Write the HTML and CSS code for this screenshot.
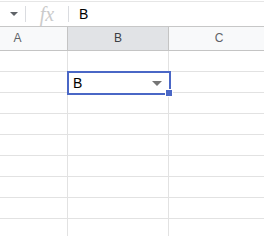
FILE: index.html
```html
<!DOCTYPE html>
<html>
    <head>
        <link rel="stylesheet" href="styles.css">
    </head>
    <body>
        <div class="formula-bar">
            <div class="name-box"><span class="caret"></span></div>
            <div class="fx">fx</div>
            <div class="formula-value">B</div>
        </div>

        <div class="sheet">
            <div class="col-head">A</div>
            <div class="col-head selected">B</div>
            <div class="col-head">C</div>

            <div class="cell"></div><div class="cell"></div><div class="cell"></div>
            <div class="cell"></div>
            <div class="cell active">
                <span>B</span>
                <span class="cell-caret"></span>
                <span class="handle"></span>
            </div>
            <div class="cell"></div>
            <div class="cell"></div><div class="cell"></div><div class="cell"></div>
            <div class="cell"></div><div class="cell"></div><div class="cell"></div>
            <div class="cell"></div><div class="cell"></div><div class="cell"></div>
            <div class="cell"></div><div class="cell"></div><div class="cell"></div>
            <div class="cell"></div><div class="cell"></div><div class="cell"></div>
            <div class="cell"></div><div class="cell"></div><div class="cell"></div>
            <div class="cell"></div><div class="cell"></div><div class="cell"></div>
        </div>
    </body>
</html>
```

FILE: styles.css
```css
body {
    margin: 0;
    background: #fff;
    font-family: "Liberation Sans", Arial, sans-serif;
    overflow: hidden;
}

.formula-bar {
    display: flex;
    align-items: center;
    height: 24px;
    border-top: 1px solid #e6e6e6;
    border-bottom: 1px solid #c7c7c7;
    margin-top: 1px;
}

.name-box {
    width: 25px;
    height: 16px;
    display: flex;
    align-items: center;
    justify-content: center;
    border-right: 1px solid #dadce0;
}

.caret {
    width: 0;
    height: 0;
    border-left: 4px solid transparent;
    border-right: 4px solid transparent;
    border-top: 4px solid #5f6368;
    margin-left: 2px;
}

.fx {
    width: 42px;
    height: 16px;
    line-height: 16px;
    text-align: center;
    font-family: "Liberation Serif", serif;
    font-style: italic;
    font-size: 20px;
    color: #cbcbcb;
    border-right: 1px solid #dadce0;
}

.formula-value {
    padding-left: 10px;
    font-size: 14px;
    color: #000;
}

.sheet {
    display: grid;
    grid-template-columns: 100px 101px 101px;
    grid-template-rows: 24px;
    grid-auto-rows: 21px;
    margin-left: -32px;
}

.col-head {
    height: 23px;
    line-height: 23px;
    text-align: center;
    font-size: 12px;
    color: #5f6368;
    background: #f8f9fa;
    border-right: 1px solid #c4c4c4;
    border-bottom: 1px solid #c4c4c4;
}

.col-head.selected {
    background: #e1e3e6;
    color: #3c4043;
}

.cell {
    border-right: 1px solid #e2e2e2;
    border-bottom: 1px solid #e2e2e2;
}

.cell.active {
    position: relative;
    display: flex;
    align-items: center;
    justify-content: space-between;
    padding: 0 7px 0 4px;
    margin: -1px -2px -2px -1px;
    border: 2px solid #4a67c6;
    font-size: 14px;
    color: #000;
    z-index: 1;
}

.cell-caret {
    width: 0;
    height: 0;
    border-left: 5px solid transparent;
    border-right: 5px solid transparent;
    border-top: 5px solid #757575;
}

.handle {
    position: absolute;
    right: -4px;
    bottom: -4px;
    width: 6px;
    height: 6px;
    background: #4a67c6;
    border: 1px solid #fff;
}
```
